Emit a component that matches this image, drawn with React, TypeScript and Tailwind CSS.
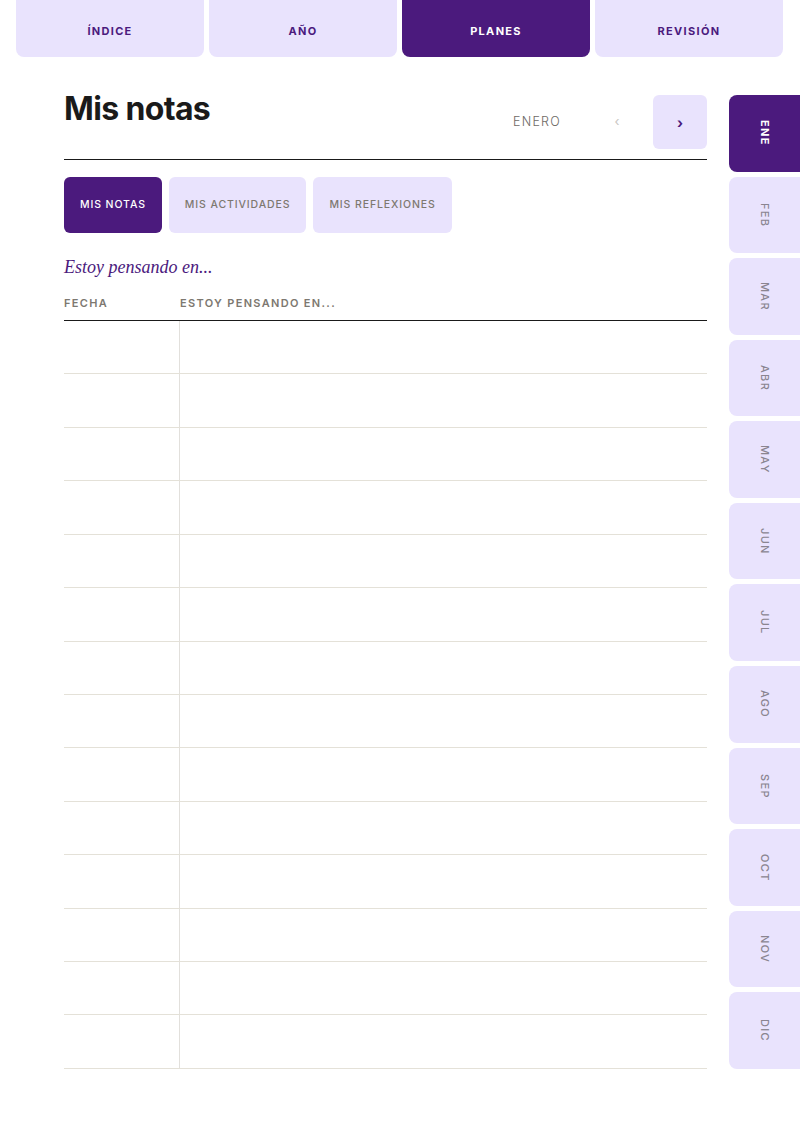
const topTabs = ['ÍNDICE', 'AÑO', 'PLANES', 'REVISIÓN'];
const subTabs = ['MIS NOTAS', 'MIS ACTIVIDADES', 'MIS REFLEXIONES'];
const months = ['ENE', 'FEB', 'MAR', 'ABR', 'MAY', 'JUN', 'JUL', 'AGO', 'SEP', 'OCT', 'NOV', 'DIC'];
const rows = Array.from({ length: 14 }, (_, i) => i);

export default function App() {
  return (
    <div className="min-h-[1134px] w-[800px] overflow-hidden bg-white font-['Inter',sans-serif]">
      {/* Top section tabs */}
      <div className="ml-4 grid w-[767px] grid-cols-4 gap-[5px]">
        {topTabs.map((tab) => {
          const active = tab === 'PLANES';
          return (
            <div
              key={tab}
              className={
                active
                  ? 'flex h-[57px] items-center justify-center rounded-b-lg bg-[#4b1a7d] pt-[5px] text-[11px] font-bold tracking-[0.12em] text-white'
                  : 'flex h-[57px] items-center justify-center rounded-b-lg bg-[#e9e3fd] pt-[5px] text-[11px] font-bold tracking-[0.12em] text-[#4b1a7d]'
              }
            >
              {tab}
            </div>
          );
        })}
      </div>

      <div className="mt-[38px] flex items-stretch">
        {/* Main page */}
        <div className="ml-16 w-[643px]">
          <div className="flex h-[65px] items-start justify-between border-b border-[#1a1a1a]">
            <h1 className="mt-[-10px] text-[32px] font-bold leading-[48px] tracking-[-0.02em] text-[#1a1a1a]">Mis notas</h1>
            <div className="flex h-[54px] items-center">
              <span className="text-[12.5px] font-light tracking-[0.1em] text-[#6e6a66]">ENERO</span>
              <button className="ml-[29px] flex h-[54px] w-[54px] items-center justify-center text-[13px] text-[#c9c6c2]">‹</button>
              <button className="ml-[9px] flex h-[54px] w-[54px] items-center justify-center rounded-md bg-[#e9e3fd] text-[14px] font-bold text-[#4b1a7d]">›</button>
            </div>
          </div>

          <div className="mt-[17px] flex gap-[7px]">
            {subTabs.map((tab) => {
              const active = tab === 'MIS NOTAS';
              return (
                <div
                  key={tab}
                  className={
                    active
                      ? 'flex h-[56px] items-center rounded-md bg-[#4b1a7d] pl-4 pr-[16px] text-[10.5px] font-medium tracking-[0.085em] text-white'
                      : 'flex h-[56px] items-center rounded-md bg-[#e9e3fd] pl-4 pr-[16px] text-[10.5px] font-medium tracking-[0.085em] text-[#7d7870]'
                  }
                >
                  {tab}
                </div>
              );
            })}
          </div>

          <p className="mt-[22px] font-['Liberation_Serif',serif] text-[18px] italic leading-[24px] text-[#4b1a7d]">
            Estoy pensando en...
          </p>

          <div className="mt-[16px] flex h-[25px] items-start text-[11px] font-semibold tracking-[0.12em] text-[#7d7870]">
            <span className="w-[116px]">FECHA</span>
            <span>ESTOY PENSANDO EN...</span>
          </div>

          <div className="border-t border-[#1a1a1a]">
            {rows.map((r) => (
              <div key={r} className="flex h-[53.43px] border-b border-[#e4e1d8]">
                <div className="w-[116px] border-r border-[#e2e0dc]" />
                <div className="flex-1" />
              </div>
            ))}
          </div>
        </div>

        {/* Month side tabs */}
        <div className="ml-[22px] flex w-[71px] flex-col gap-[5px]">
          {months.map((m) => {
            const active = m === 'ENE';
            return (
              <div
                key={m}
                className={
                  active
                    ? 'flex flex-1 items-center justify-center rounded-l-lg bg-[#4b1a7d] text-[11px] font-bold tracking-[0.12em] text-white [writing-mode:vertical-rl]'
                    : 'flex flex-1 items-center justify-center rounded-l-lg bg-[#e9e3fd] text-[11px] font-medium tracking-[0.12em] text-[#8a8590] [writing-mode:vertical-rl]'
                }
              >
                {m}
              </div>
            );
          })}
        </div>
      </div>
    </div>
  );
}
